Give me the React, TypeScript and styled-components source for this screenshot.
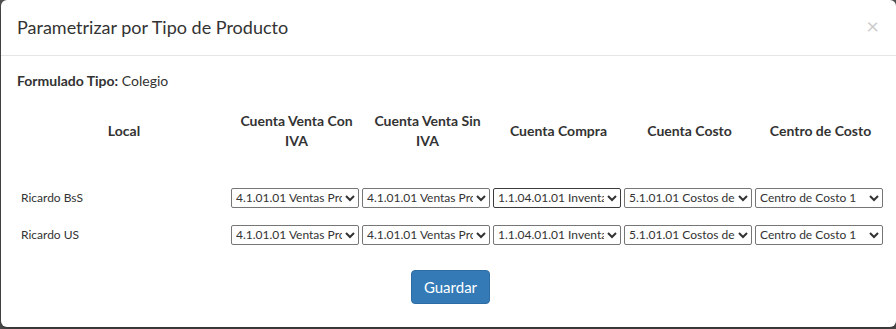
import React from 'react'
import styled, { createGlobalStyle } from 'styled-components'

const GlobalStyle = createGlobalStyle`
  html, body {
    margin: 0;
    padding: 0;
    background: #555555;
  }
  body {
    font-family: Lato, 'Noto Sans', sans-serif;
    font-size: 12px;
    line-height: 20px;
    color: #333;
  }
`

const Backdrop = styled.div`
  width: 896px;
  height: 329px;
  overflow: hidden;
  background: #555555;
`

const Modal = styled.div`
  width: 895px;
  margin-left: 1px;
  background: #fff;
  border-radius: 6px;
  box-shadow: 0 3px 9px rgba(0, 0, 0, 0.5);
`

const Header = styled.div`
  display: flex;
  align-items: center;
  justify-content: space-between;
  padding: 15px 15px 15px 16px;
  border-bottom: 1px solid #e5e5e5;
  height: 25px;
`

const Title = styled.h4`
  margin: 0;
  font-size: 18px;
  font-weight: 400;
  line-height: 25px;
`

const Close = styled.button`
  border: 0;
  background: transparent;
  padding: 0;
  margin: -4px 2px 0 0;
  font-family: Lato, sans-serif;
  font-size: 22px;
  font-weight: 400;
  line-height: 1;
  color: #000;
  opacity: 0.2;
  cursor: pointer;
`

const Body = styled.div`
  padding: 15px 15px 23px 16px;
`

const Info = styled.p`
  margin: 0 0 12px;
  font-size: 14px;
  line-height: 20px;
`

const Grid = styled.div`
  display: grid;
  grid-template-columns: 214px repeat(5, 131px);
`

const HeadRow = styled(Grid)`
  margin-bottom: 20px;
`

const Th = styled.div`
  display: flex;
  align-items: center;
  justify-content: center;
  text-align: center;
  padding: 8px 8px;
  font-size: 14px;
  font-weight: 700;
  line-height: 20px;
`

const Row = styled(Grid)`
  height: 37px;
  align-items: center;
`

const Td = styled.div`
  padding: 0 0 0 4px;
`

const Cell = styled.div`
  display: flex;
  align-items: center;
`

const Select = styled.select<{ $active?: boolean }>`
  width: 128px;
  height: 20px;
  padding: 0;
  font-family: Lato, 'Noto Sans', sans-serif;
  font-size: 12px;
  color: #333;
  background: #fff;
  border: 1px solid ${p => (p.$active ? '#3b3b3b' : '#767676')};
  border-radius: 2px;
`

const Footer = styled.div`
  display: flex;
  justify-content: center;
  padding-left: 3px;
  margin-top: 17px;
`

const Button = styled.button`
  height: 34px;
  padding: 6px 12px;
  font-family: Lato, 'Noto Sans', sans-serif;
  font-size: 15px;
  line-height: 20px;
  color: #fff;
  background: #337ab7;
  border: 1px solid #2e6da4;
  border-radius: 4px;
  cursor: pointer;
`

const columns = ['Cuenta Venta Con IVA', 'Cuenta Venta Sin IVA', 'Cuenta Compra', 'Cuenta Costo', 'Centro de Costo']

const accounts = [
  '4.1.01.01 Ventas Productos',
  '4.1.01.01 Ventas Productos',
  '1.1.04.01.01 Inventario',
  '5.1.01.01 Costos de Ventas',
  'Centro de Costo 1'
]

const locales = ['Ricardo BsS', 'Ricardo US']

export default function App() {
  return (
    <Backdrop>
      <GlobalStyle />
      <Modal>
        <Header>
          <Title>Parametrizar por Tipo de Producto</Title>
          <Close aria-label="Cerrar">×</Close>
        </Header>
        <Body>
          <Info>
            <b>Formulado Tipo:</b> Colegio
          </Info>
          <HeadRow>
            <Th>Local</Th>
            {columns.map(c => (
              <Th key={c}>{c}</Th>
            ))}
          </HeadRow>
          {locales.map((local, r) => (
            <Row key={local}>
              <Td>{local}</Td>
              {accounts.map((a, i) => (
                <Cell key={i}>
                  <Select defaultValue={a} $active={r === 0 && i === 2}>
                    <option>{a}</option>
                  </Select>
                </Cell>
              ))}
            </Row>
          ))}
          <Footer>
            <Button>Guardar</Button>
          </Footer>
        </Body>
      </Modal>
    </Backdrop>
  )
}
